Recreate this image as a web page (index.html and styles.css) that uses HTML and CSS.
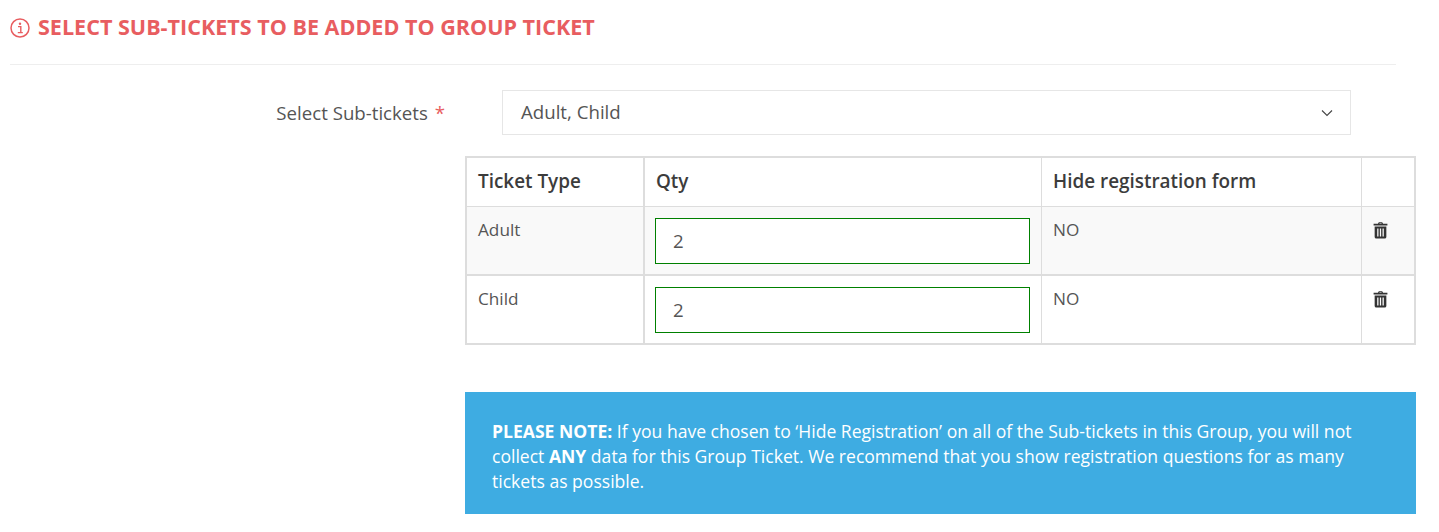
FILE: index.html
```html
<!DOCTYPE html>
<html lang="en">
<head>
<meta charset="utf-8">
<title>Select Sub-tickets</title>
<link rel="stylesheet" href="styles.css">
</head>
<body>
<header class="section-head">
  <h2 class="section-title">
    <svg class="info-icon" viewBox="0 0 20 20" aria-hidden="true"><circle cx="10" cy="10" r="9" fill="none" stroke="currentColor" stroke-width="1.5"/><circle cx="10" cy="5.8" r="1.2" fill="currentColor"/><path d="M8 8.6h2.8v5.6M7.8 14.6h5" fill="none" stroke="currentColor" stroke-width="1.4"/></svg>
    <span>SELECT SUB-TICKETS TO BE ADDED TO GROUP TICKET</span>
  </h2>
</header>
<div class="form-row">
  <label class="form-label">Select Sub-tickets <span class="req">*</span></label>
  <div class="select-box">
    <span>Adult, Child</span>
    <svg class="chevron" viewBox="0 0 12 8" aria-hidden="true"><path d="M1 1.5l5 5 5-5" fill="none" stroke="currentColor" stroke-width="1.1"/></svg>
  </div>
</div>
<div class="content">
  <table class="tickets">
    <colgroup><col class="c1"><col class="c2"><col class="c3"><col class="c4"></colgroup>
    <thead>
      <tr><th>Ticket Type</th><th>Qty</th><th>Hide registration form</th><th></th></tr>
    </thead>
    <tbody>
      <tr class="striped">
        <td>Adult</td>
        <td><div class="qty">2</div></td>
        <td>NO</td>
        <td><svg class="trash" viewBox="0 0 14 16" aria-hidden="true"><path fill-rule="evenodd" d="M4.6 1.6L5.4.3h3.2l.8 1.3H13.5v1.6H.5V1.6zM5.9 1.6h2.2l-.2-.4H6.1zM1.5 4.2h11V14a1.6 1.6 0 0 1-1.6 1.6H3.1A1.6 1.6 0 0 1 1.5 14zM3.9 6v7.6h1.2V6zM6.4 6v7.6h1.2V6zM8.9 6v7.6h1.2V6z"/></svg></td>
      </tr>
      <tr>
        <td>Child</td>
        <td><div class="qty">2</div></td>
        <td>NO</td>
        <td><svg class="trash" viewBox="0 0 14 16" aria-hidden="true"><path fill-rule="evenodd" d="M4.6 1.6L5.4.3h3.2l.8 1.3H13.5v1.6H.5V1.6zM5.9 1.6h2.2l-.2-.4H6.1zM1.5 4.2h11V14a1.6 1.6 0 0 1-1.6 1.6H3.1A1.6 1.6 0 0 1 1.5 14zM3.9 6v7.6h1.2V6zM6.4 6v7.6h1.2V6zM8.9 6v7.6h1.2V6z"/></svg></td>
      </tr>
    </tbody>
  </table>
  <div class="note">
    <strong>PLEASE NOTE:</strong> If you have chosen to ‘Hide Registration’ on all of the Sub-tickets in this Group, you will not collect <strong>ANY</strong> data for this Group Ticket. We recommend that you show registration questions for as many tickets as possible.
  </div>
</div>
</body>
</html>
```
FILE: styles.css
```css
* { box-sizing: border-box; }
html, body { margin: 0; padding: 0; background: #fff; }
body {
  font-family: "Open Sans", "Liberation Sans", sans-serif;
  font-size: 16px;
  color: #555;
  height: 532px;
  overflow: hidden;
}
.section-head {
  margin: 0 43px 0 10px;
  height: 65px;
  border-bottom: 1px solid #eee;
  padding-top: 12px;
}
.section-title {
  display: flex;
  align-items: center;
  gap: 8px;
  margin: 0;
  height: 30px;
  font-size: 21.55px;
  line-height: 30px;
  font-weight: 700;
  color: #e85d60;
}
.info-icon { width: 20px; height: 20px; flex: none; margin-top: 2px; }
.form-row {
  display: flex;
  align-items: center;
  margin-top: 25px;
  height: 45px;
}
.form-label {
  width: 445px;
  text-align: right;
  font-size: 18.67px;
}
.req { color: #e85d60; margin-left: 2px; }
.select-box {
  margin-left: 57px;
  width: 849px;
  height: 45px;
  border: 1px solid #e6e6e6;
  display: flex;
  align-items: center;
  justify-content: space-between;
  padding: 0 17px 0 18px;
  font-size: 18.67px;
}
.select-box span { line-height: 24px; margin-bottom: 2px; }
.chevron { width: 12px; height: 8px; color: #444; }
.content { margin: 21px 23px 0 465px; }
.tickets {
  width: 951px;
  table-layout: fixed;
  border-collapse: separate;
  border-spacing: 0;
  border: 2px solid #ddd;
}
.c1 { width: 176px; }
.c2 { width: 398px; }
.c3 { width: 320px; }
.c4 { width: 53px; }
.tickets th, .tickets td {
  border-left: 1px solid #ddd;
  padding: 12px 11px;
  text-align: left;
  vertical-align: top;
}
.tickets th:first-child, .tickets td:first-child { border-left: 0; }
.tickets tr > :nth-child(2) { border-left-width: 2px; }
.tickets th {
  height: 49px;
  font-size: 18.9px;
  line-height: 26px;
  font-weight: 600;
  color: #3c3c3c;
  border-bottom: 1px solid #ddd;
  padding-top: 10px;
}
.tickets td {
  height: 67px;
  font-size: 17.2px;
  line-height: 22px;
  padding-top: 12px;
}
.tickets tbody tr:first-child td { height: 69px; border-bottom: 2px solid #ddd; }
.striped td { background: #f9f9f9; }
.tickets td:nth-child(2) { padding: 11px 11px 0 10px; }
.qty {
  height: 46px;
  border: 1px solid #008000;
  background: #fff;
  padding: 0 17px;
  font-size: 18.67px;
  line-height: 44px;
}
.trash { display: block; width: 15px; height: 17px; fill: #333; margin-top: 3px; }
.note {
  margin-top: 47px;
  width: 951px;
  height: 122px;
  background: #3eace2;
  color: #fff;
  padding: 27px 27px;
  font-size: 17.57px;
  line-height: 25px;
}
.note strong { font-weight: 700; }
```
